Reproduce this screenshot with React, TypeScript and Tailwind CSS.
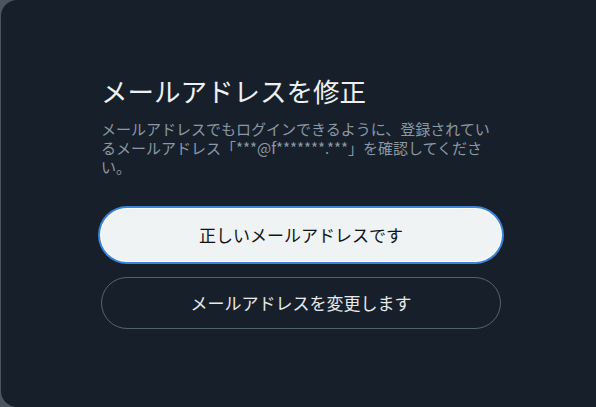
export default function App() {
  return (
    <div className="flex h-[407px] w-[596px] overflow-hidden bg-[#4b5560] font-['Noto_Sans_CJK_JP','Noto_Sans',sans-serif]">
      <div className="ml-[1px] flex h-full w-[600px] shrink-0 flex-col rounded-l-2xl bg-[#17202a] px-[100px] pt-[73px]">
        <h1 className="text-[26.5px] leading-[36px] text-[#eef0f1]">メールアドレスを修正</h1>
        <p className="mt-[10px] text-[15px] leading-[19px] text-[#8b98a5]">
          メールアドレスでもログインできるように、登録されているメールアドレス「***@f*******.***」を確認してください。
        </p>
        <div className="mt-[33px] flex flex-col gap-[16px]">
          <button className="flex h-[52px] items-center justify-center rounded-full bg-[#eff3f4] text-[17px] text-[#0f1419] shadow-[0_0_0_1px_#ffffff,0_0_0_3px_#3c84d8]">
            正しいメールアドレスです
          </button>
          <button className="flex h-[52px] items-center justify-center rounded-full border border-[#536471] text-[17px] text-[#e7e9ea]">
            メールアドレスを変更します
          </button>
        </div>
      </div>
    </div>
  );
}
